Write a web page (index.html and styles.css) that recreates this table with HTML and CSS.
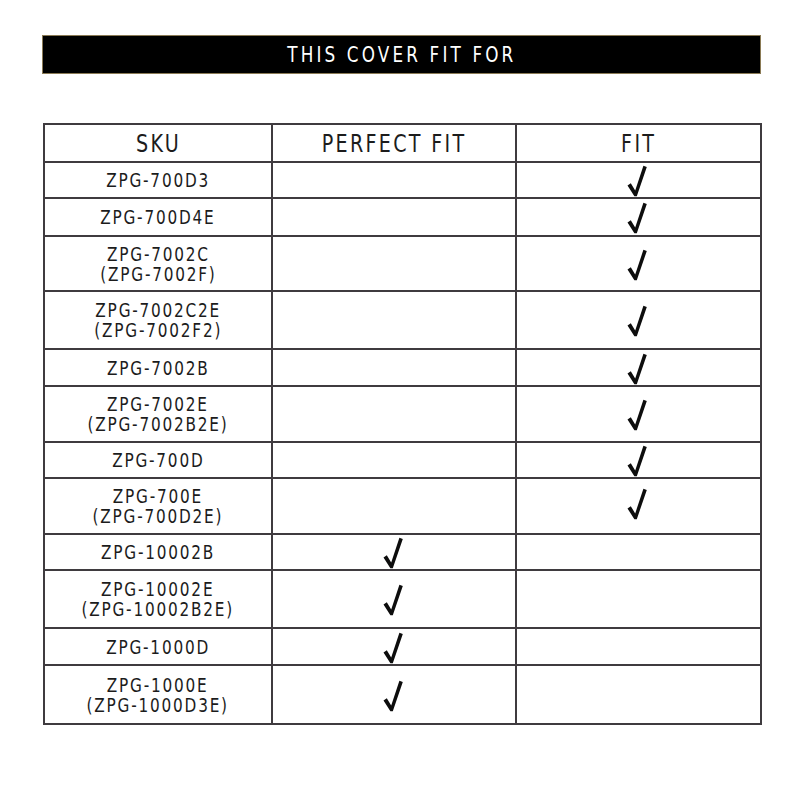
FILE: index.html
```html
<!DOCTYPE html>
<html>
<head>
<meta charset="utf-8">
<link rel="stylesheet" href="styles.css">
</head>
<body>
<div class="page">
  <div class="banner"><span class="t">THIS COVER FIT FOR</span></div>
  <table class="fit">
    <colgroup><col class="c1"><col class="c2"><col class="c3"></colgroup>
    <tr class="head"><th><span class="t">SKU</span></th><th><span class="t">PERFECT FIT</span></th><th><span class="t">FIT</span></th></tr>
    <tr class="r36"><td><span class="t">ZPG-700D3</span></td><td></td><td><span class="chk"></span></td></tr>
    <tr class="r38"><td><span class="t">ZPG-700D4E</span></td><td></td><td><span class="chk"></span></td></tr>
    <tr class="r55"><td><span class="t">ZPG-7002C<br>(ZPG-7002F)</span></td><td></td><td><span class="chk"></span></td></tr>
    <tr class="r58"><td><span class="t">ZPG-7002C2E<br>(ZPG-7002F2)</span></td><td></td><td><span class="chk"></span></td></tr>
    <tr class="r37"><td><span class="t">ZPG-7002B</span></td><td></td><td><span class="chk"></span></td></tr>
    <tr class="r56"><td><span class="t">ZPG-7002E<br>(ZPG-7002B2E)</span></td><td></td><td><span class="chk"></span></td></tr>
    <tr class="r36"><td><span class="t">ZPG-700D</span></td><td></td><td><span class="chk"></span></td></tr>
    <tr class="r56"><td><span class="t">ZPG-700E<br>(ZPG-700D2E)</span></td><td></td><td><span class="chk up"></span></td></tr>
    <tr class="r36"><td><span class="t">ZPG-10002B</span></td><td><span class="chk"></span></td><td></td></tr>
    <tr class="r58"><td><span class="t">ZPG-10002E<br>(ZPG-10002B2E)</span></td><td><span class="chk"></span></td><td></td></tr>
    <tr class="r37"><td><span class="t">ZPG-1000D</span></td><td><span class="chk"></span></td><td></td></tr>
    <tr class="r60"><td><span class="t">ZPG-1000E<br>(ZPG-1000D3E)</span></td><td><span class="chk"></span></td><td></td></tr>
  </table>
</div>
<svg width="0" height="0" style="position:absolute">
  <defs>
    <symbol id="ck" viewBox="0 0 20 32">
      <path d="M0.5 20.5 L3.8 18.2 L8.2 25.4 L16.4 0.8 L19.8 1.9 L9.8 31.2 L7.4 31.2 Z" fill="#0d0d0d"/>
    </symbol>
  </defs>
</svg>
<script>
document.querySelectorAll('.chk').forEach(function(s){
  s.innerHTML='<svg viewBox="0 0 20 32" width="20" height="32"><use href="#ck"/></svg>';
});
</script>
</body>
</html>
```
FILE: styles.css
```css
html, body {
  margin: 0;
  padding: 0;
  background: #ffffff;
}
.page {
  padding: 35px 0 0 42px;
  font-family: "DejaVu Sans Condensed", "DejaVu Sans", sans-serif;
  font-stretch: condensed;
}
.t {
  display: inline-block;
  transform: scaleX(0.85);
  transform-origin: center;
}
.banner {
  box-sizing: border-box;
  width: 719px;
  height: 39px;
  background: #000;
  border: 1.5px solid #8a7a55;
  color: #fff;
  font-size: 22px;
  letter-spacing: 3.7px;
  text-align: center;
  line-height: 37px;
  font-weight: normal;
}
.fit {
  margin-top: 49px;
  margin-left: 1px;
  border-collapse: collapse;
  width: 717px;
  table-layout: fixed;
  color: #1c1c1c;
}
.c1 { width: 228px; }
.c2 { width: 244px; }
.c3 { width: 245px; }
.fit th, .fit td {
  border: 2px solid #3f3b3f;
  text-align: center;
  vertical-align: middle;
  padding: 0;
  font-weight: normal;
}
.fit th {
  font-size: 25px;
  height: 34px;
  letter-spacing: 2.7px;
  padding-top: 2px;
  line-height: 30px;
}
.fit td {
  font-size: 20px;
  line-height: 20px;
  letter-spacing: 2.1px;
}
.r36 td { height: 34px; }
.r37 td { height: 35px; }
.r38 td { height: 36px; }
.r55 td { height: 53px; }
.r56 td { height: 54px; }
.r58 td { height: 56px; }
.r60 td { height: 57px; }
.chk {
  display: inline-block;
  width: 20px;
  height: 32px;
  vertical-align: middle;
  margin-left: -3px;
  position: relative;
  top: 1px;
}
.chk svg { display: block; }
.chk.up { top: -2px; }
```
